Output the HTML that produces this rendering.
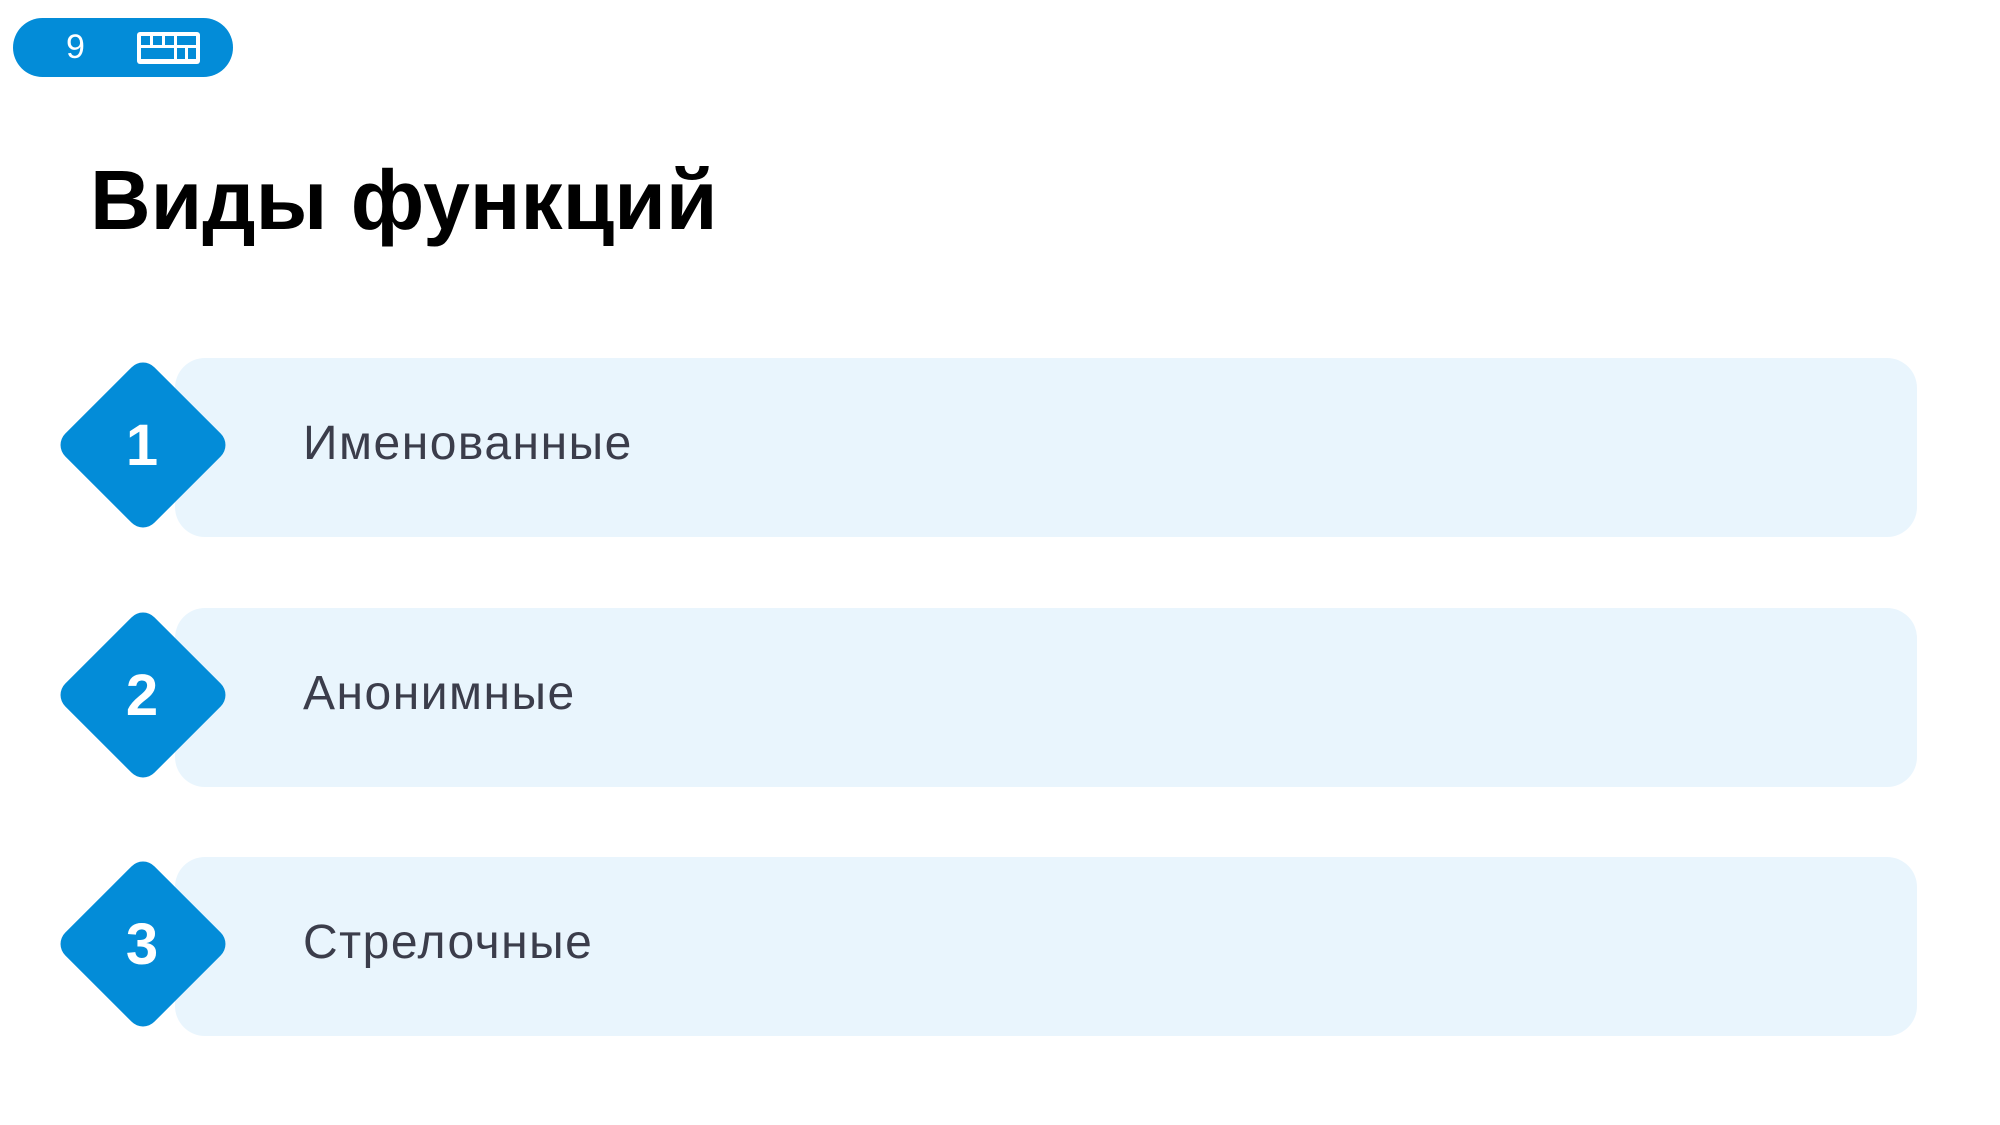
<!DOCTYPE html>
<html><head><meta charset="utf-8"><style>
html,body{margin:0;padding:0;}
body{width:2000px;height:1125px;background:#fff;position:relative;overflow:hidden;font-family:"Liberation Sans",sans-serif;}
.pill{position:absolute;left:13px;top:18px;width:220px;height:59px;border-radius:30px;background:#038cd8;}
.nine{position:absolute;left:66px;top:27px;color:#fff;font-size:34px;line-height:40px;}
.title{position:absolute;left:90px;top:150px;font-size:84px;font-weight:bold;color:#000;line-height:100px;letter-spacing:0px;}
.card{position:absolute;left:175px;width:1742px;height:179px;border-radius:30px;background:#e9f5fd;}
.dia{position:absolute;width:126px;height:126px;background:#038cd8;border-radius:16px;transform:rotate(45deg);left:80px;}
.num{position:absolute;left:82px;width:120px;text-align:center;color:#fff;font-weight:bold;font-size:58px;line-height:60px;}
.lbl{position:absolute;left:303px;font-size:48px;color:#3b3d4b;line-height:60px;letter-spacing:1.5px;}
</style></head><body>
<div class="pill"></div>
<div class="nine">9</div>
<svg style="position:absolute;left:137px;top:32px" width="63" height="32" viewBox="0 0 63 32">
<rect x="0" y="0" width="63" height="32" rx="3" fill="#fff"/>
<g fill="#038cd8">
<rect x="4" y="4" width="9" height="9"/><rect x="16" y="4" width="9" height="9"/><rect x="28" y="4" width="9" height="9"/><rect x="40" y="4" width="19" height="9"/>
<rect x="4" y="16" width="33" height="11"/><rect x="40" y="16" width="8" height="11"/><rect x="51" y="16" width="8" height="11"/>
</g></svg>
<div class="title">Виды функций</div>

<div class="card" style="top:358px"></div>
<div class="dia" style="top:382px"></div>
<div class="num" style="top:416px">1</div>
<div class="lbl" style="top:414px">Именованные</div>

<div class="card" style="top:608px"></div>
<div class="dia" style="top:632px"></div>
<div class="num" style="top:666px">2</div>
<div class="lbl" style="top:664px">Анонимные</div>

<div class="card" style="top:857px"></div>
<div class="dia" style="top:881px"></div>
<div class="num" style="top:915px">3</div>
<div class="lbl" style="top:913px">Стрелочные</div>
</body></html>
